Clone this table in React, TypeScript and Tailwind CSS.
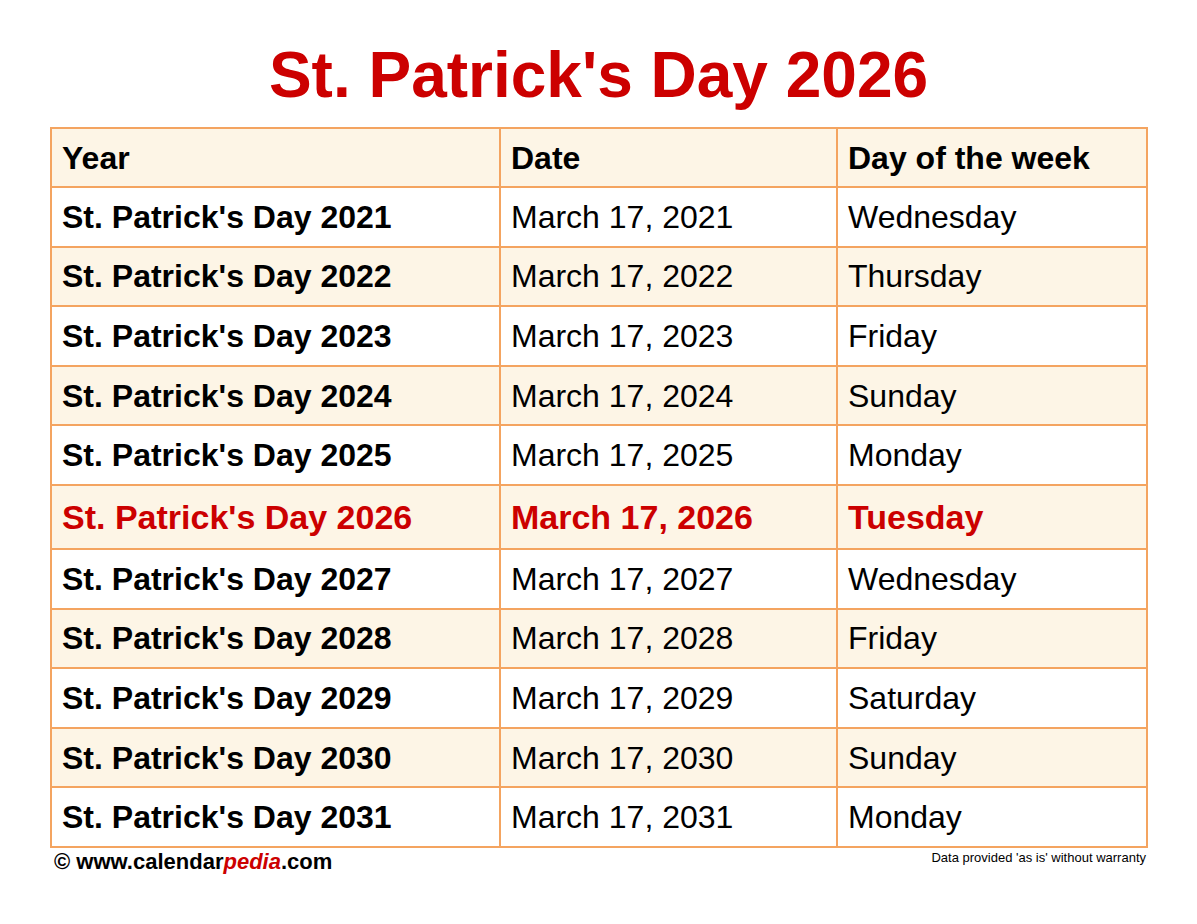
import React from "react";

const rows: { year: string; date: string; day: string; hl?: boolean }[] = [
  { year: "St. Patrick's Day 2021", date: "March 17, 2021", day: "Wednesday" },
  { year: "St. Patrick's Day 2022", date: "March 17, 2022", day: "Thursday" },
  { year: "St. Patrick's Day 2023", date: "March 17, 2023", day: "Friday" },
  { year: "St. Patrick's Day 2024", date: "March 17, 2024", day: "Sunday" },
  { year: "St. Patrick's Day 2025", date: "March 17, 2025", day: "Monday" },
  { year: "St. Patrick's Day 2026", date: "March 17, 2026", day: "Tuesday", hl: true },
  { year: "St. Patrick's Day 2027", date: "March 17, 2027", day: "Wednesday" },
  { year: "St. Patrick's Day 2028", date: "March 17, 2028", day: "Friday" },
  { year: "St. Patrick's Day 2029", date: "March 17, 2029", day: "Saturday" },
  { year: "St. Patrick's Day 2030", date: "March 17, 2030", day: "Sunday" },
  { year: "St. Patrick's Day 2031", date: "March 17, 2031", day: "Monday" },
];

export default function App() {
  return (
    <div
      className="w-[1197px] h-[924px] bg-white text-black"
      style={{ fontFamily: '"Liberation Sans", Arial, sans-serif' }}
    >
      <h1 className="pt-[39px] h-[127px] text-center text-[64px] leading-[72px] font-bold text-[#cc0000]">
        St. Patrick's Day 2026
      </h1>
      <div className="pl-[50px]">
        <table className="w-[1096px] border-collapse border-2 border-[#f4a460] table-fixed">
          <colgroup>
            <col className="w-[449px]" />
            <col className="w-[337px]" />
            <col className="w-[310px]" />
          </colgroup>
          <thead>
            <tr className="h-[59px] bg-[#fdf5e6]">
              <th className="border-2 border-[#f4a460] text-left pl-[10px] text-[32px] font-bold leading-none p-0">Year</th>
              <th className="border-2 border-[#f4a460] text-left pl-[10px] text-[32px] font-bold leading-none p-0">Date</th>
              <th className="border-2 border-[#f4a460] text-left pl-[10px] text-[32px] font-bold leading-none p-0">Day of the week</th>
            </tr>
          </thead>
          <tbody>
            {rows.map((r, i) => (
              <tr
                key={r.year}
                className={(r.hl ? "h-[64px] text-[#cc0000] " : "h-[59.6px] ") + (i % 2 === 1 ? "bg-[#fdf5e6]" : "bg-white")}
              >
                <td className={"border-2 border-[#f4a460] pl-[10px] font-bold leading-none p-0 " + (r.hl ? "text-[34px]" : "text-[32px]")}>
                  {r.year}
                </td>
                <td className={"border-2 border-[#f4a460] pl-[10px] leading-none p-0 " + (r.hl ? "text-[34px] font-bold" : "text-[32px]")}>
                  {r.date}
                </td>
                <td className={"border-2 border-[#f4a460] pl-[10px] leading-none p-0 " + (r.hl ? "text-[34px] font-bold" : "text-[32px]")}>
                  {r.day}
                </td>
              </tr>
            ))}
          </tbody>
        </table>
        <div className="w-[1097px] flex justify-between items-start mt-[1px]">
          <div className="text-[22px] font-bold leading-[26px] pl-[4px]">
            © www.calendar<span className="italic text-[#cc0000]">pedia</span>.com
          </div>
          <div className="text-[13px] leading-[16px] mt-[1px] pr-[1px]">Data provided 'as is' without warranty</div>
        </div>
      </div>
    </div>
  );
}
